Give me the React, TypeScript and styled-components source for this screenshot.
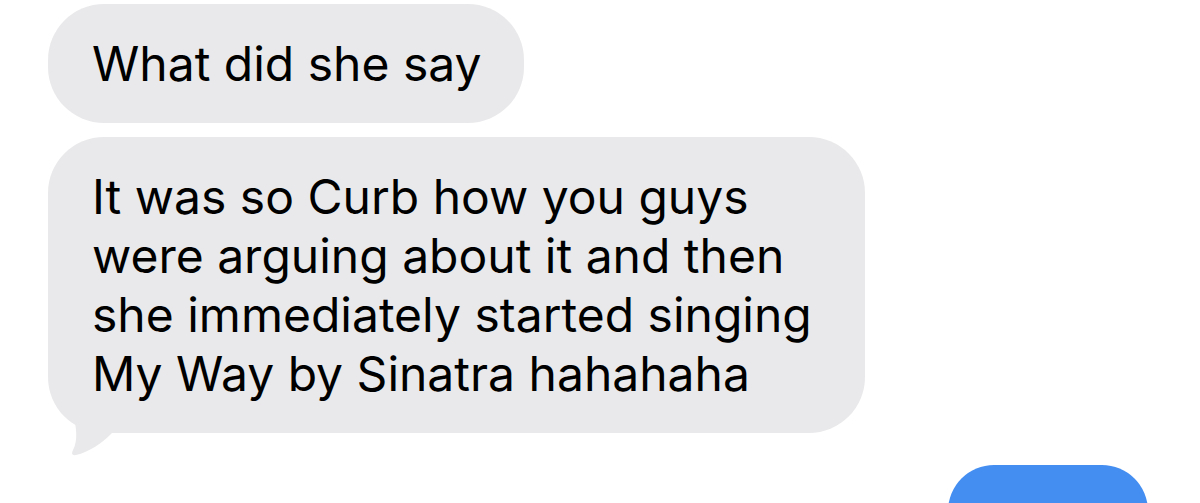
import React from 'react';
import styled, { createGlobalStyle } from 'styled-components';

const GlobalStyle = createGlobalStyle`
  html, body {
    margin: 0;
    padding: 0;
    background: #ffffff;
    overflow: hidden;
  }
  body {
    font-family: Inter, "Noto Sans", "Liberation Sans", sans-serif;
    -webkit-font-smoothing: antialiased;
  }
`;

const Thread = styled.div`
  width: 1200px;
  height: 503px;
  box-sizing: border-box;
  padding: 4px 52px 0 48px;
  display: flex;
  flex-direction: column;
  overflow: hidden;
`;

const Row = styled.div<{ $mine?: boolean; $gap?: number }>`
  display: flex;
  justify-content: ${(p) => (p.$mine ? 'flex-end' : 'flex-start')};
  margin-top: ${(p) => p.$gap ?? 0}px;
`;

const Bubble = styled.div<{ $mine?: boolean; $width?: number }>`
  position: relative;
  box-sizing: border-box;
  width: ${(p) => (p.$width ? `${p.$width}px` : 'auto')};
  padding: 30px 42px 30px 44px;
  border-radius: ${(p) => (p.$mine ? 46 : 56)}px;
  background: ${(p) => (p.$mine ? '#448ef2' : '#e9e9eb')};
  color: ${(p) => (p.$mine ? '#ffffff' : '#000000')};
  font-size: 48px;
  line-height: 59px;
  flex-shrink: 0;
`;

const Tail = styled.svg`
  position: absolute;
  left: 0;
  bottom: -24px;
  width: 80px;
  height: 64px;
`;

const BubbleTail = () => (
  <Tail viewBox="0 0 80 64">
    <path
      d="M24 18 C29 34 30 48 25 57 Q22 63 28 62 C41 59 53 51 64 40 L64 18 Z"
      fill="#e9e9eb"
    />
  </Tail>
);

const lines = [
  'It was so Curb how you guys',
  'were arguing about it and then',
  'she immediately started singing',
  'My Way by Sinatra hahahaha',
];

export default function App() {
  return (
    <>
      <GlobalStyle />
      <Thread>
        <Row>
          <Bubble>What did she say</Bubble>
        </Row>
        <Row $gap={14}>
          <Bubble $width={817}>
            {lines.map((l, i) => (
              <React.Fragment key={i}>
                {l}
                {i < lines.length - 1 && <br />}
              </React.Fragment>
            ))}
            <BubbleTail />
          </Bubble>
        </Row>
        <Row $mine $gap={32}>
          <Bubble $mine $width={200}>&nbsp;</Bubble>
        </Row>
      </Thread>
    </>
  );
}
